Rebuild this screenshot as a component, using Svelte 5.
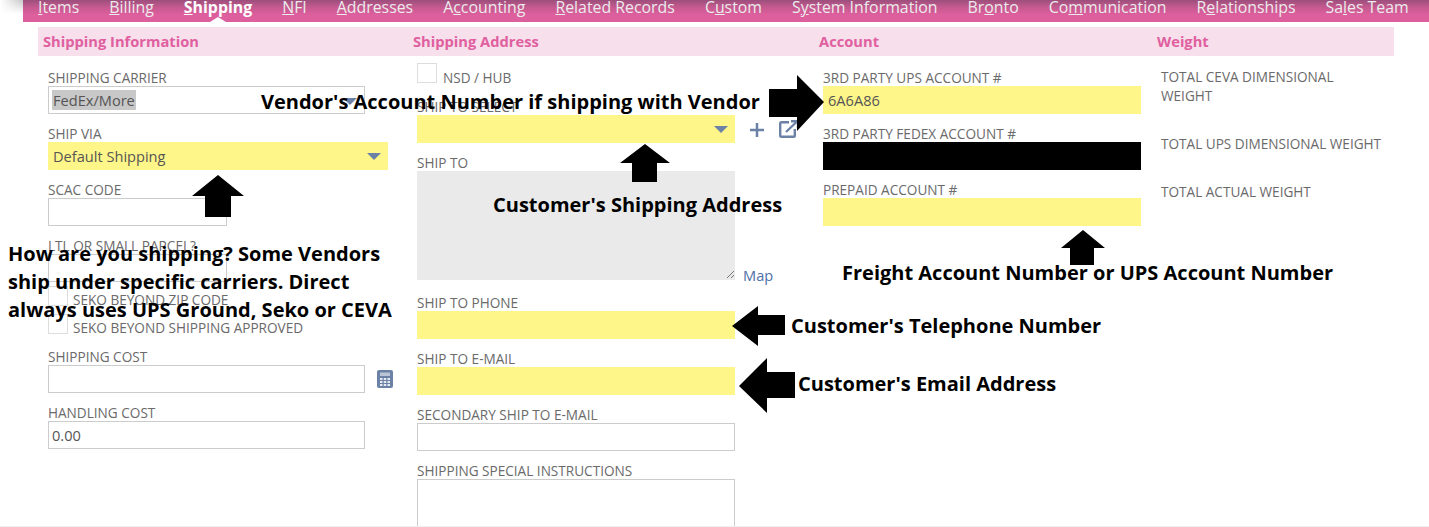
<script>
  const tabs = [
    ["", "I", "tems"], ["", "B", "illing"], ["", "S", "hipping"], ["", "N", "FI"],
    ["", "A", "ddresses"], ["A", "c", "counting"], ["", "R", "elated Records"], ["C", "u", "stom"],
    ["S", "y", "stem Information"], ["Br", "o", "nto"], ["Co", "m", "munication"],
    ["R", "e", "lationships"], ["Sa", "l", "es Team"]
  ];

  // annotation arrows: box x, y, w, h and the polygon inside it
  const arrows = [
    { x: 192, y: 175, w: 52, h: 42, p: "26,0 52,21 39,21 39,42 13,42 13,21 0,21" },
    { x: 769, y: 75, w: 56, h: 56, p: "0,14 28,14 28,0 55,27 28,56 28,42 0,42" },
    { x: 620, y: 144, w: 50, h: 38, p: "25,0 50,19 37,19 37,38 12,38 12,19 0,19" },
    { x: 1061, y: 230, w: 45, h: 35, p: "22,0 44,18 33,18 33,35 9,35 9,18 0,18" },
    { x: 732, y: 306, w: 53, h: 40, p: "0,20 26,0 26,9 53,9 53,29 26,29 26,40" },
    { x: 739, y: 358, w: 56, h: 55, p: "0,28 28,0 28,14 56,14 56,40 28,40 28,55" }
  ];

  const notes = [
    { x: 261, y: 88, t: "Vendor's Account Number if shipping with Vendor" },
    { x: 493, y: 191, t: "Customer's Shipping Address" },
    { x: 842, y: 259, t: "Freight Account Number or UPS Account Number" },
    { x: 791, y: 312, t: "Customer's Telephone Number" },
    { x: 798, y: 370, t: "Customer's Email Address" },
    { x: 8, y: 240, t: "How are you shipping? Some Vendors" },
    { x: 8, y: 268, t: "ship under specific carriers. Direct" },
    { x: 8, y: 296, t: "always uses UPS Ground, Seko or CEVA" }
  ];
</script>

<div class="page">
  <nav class="tabs">
    {#each tabs as [a, u, b], i}
      <span class="tab" class:active={i === 2}>{a}<u>{u}</u>{b}</span>
    {/each}
  </nav>

  <div class="heads">
    <div>Shipping Information</div>
    <div>Shipping Address</div>
    <div>Account</div>
    <div>Weight</div>
  </div>

  <div class="cols">
    <section class="col">
      <div class="label">SHIPPING CARRIER</div>
      <div class="ctl short sel"><span class="picked">FedEx/More</span><i class="caret"></i></div>
      <div class="label">SHIP VIA</div>
      <div class="ctl wide req sel">Default Shipping<i class="caret"></i></div>
      <div class="label">SCAC CODE</div>
      <div class="ctl scac"></div>
      <div class="label">LTL OR SMALL PARCEL?</div>
      <div class="ctl scac"></div>
      <div class="check first"><span class="box"></span><span>SEKO BEYOND ZIP CODE</span></div>
      <div class="check"><span class="box"></span><span>SEKO BEYOND SHIPPING APPROVED</span></div>
      <div class="label gap">SHIPPING COST</div>
      <div class="with-icon">
        <div class="ctl short"></div>
        <svg class="calc" width="16" height="18" viewBox="0 0 16 18">
          <rect width="16" height="18" rx="2" fill="#6b82a6" />
          <rect x="3" y="2.500" width="10" height="3.500" fill="#b9c5d6" />
          <path d="M3 8h2.500v2H3zM6.750 8h2.500v2h-2.500zM10.500 8H13v2h-2.500zM3 11h2.500v2H3zM6.750 11h2.500v2h-2.500zM10.500 11H13v2h-2.500zM3 14h2.500v2H3zM6.750 14h2.500v2h-2.500zM10.500 14H13v2h-2.500z" fill="#e6ebf1" />
        </svg>
      </div>
      <div class="label">HANDLING COST</div>
      <div class="ctl short">0.00</div>
    </section>

    <section class="col">
      <div class="nsd"><span class="box"></span><span>NSD / HUB</span></div>
      <div class="label">SHIP TO SELECT</div>
      <div class="with-icon">
        <div class="ctl mid req sel"><i class="caret"></i></div>
        <svg class="plus" width="14" height="14" viewBox="0 0 14 14">
          <path d="M7 0v14M0 7h14" stroke="#6b82a6" stroke-width="2.500" fill="none" />
        </svg>
        <svg class="open" width="20" height="18" viewBox="0 0 20 18">
          <path d="M10 2.200H2.500a1.300 1.300 0 0 0-1.300 1.300v12a1.300 1.300 0 0 0 1.300 1.300h12a1.300 1.300 0 0 0 1.300-1.300V9" stroke="#6b82a6" stroke-width="2.400" fill="none" />
          <path d="M7 12L18 1.500M12 1.200h7V8" stroke="#6b82a6" stroke-width="2.400" fill="none" />
        </svg>
      </div>
      <div class="label">SHIP TO</div>
      <div class="with-icon map-row">
        <div class="area">
          <svg class="grip" width="9" height="9" viewBox="0 0 9 9">
            <path d="M1 8L8 1M5 8L8 5" stroke="#777" stroke-width="1" fill="none" />
          </svg>
        </div>
        <a class="map" href="#map">Map</a>
      </div>
      <div class="label after-area">SHIP TO PHONE</div>
      <div class="ctl mid req"></div>
      <div class="label">SHIP TO E-MAIL</div>
      <div class="ctl mid req"></div>
      <div class="label">SECONDARY SHIP TO E-MAIL</div>
      <div class="ctl mid"></div>
      <div class="label">SHIPPING SPECIAL INSTRUCTIONS</div>
      <div class="ctl mid notes-box"></div>
    </section>

    <section class="col">
      <div class="label">3RD PARTY UPS ACCOUNT #</div>
      <div class="ctl acct req">6A6A86</div>
      <div class="label">3RD PARTY FEDEX ACCOUNT #</div>
      <div class="ctl acct black"></div>
      <div class="label">PREPAID ACCOUNT #</div>
      <div class="ctl acct req"></div>
    </section>

    <section class="col weights">
      <div class="w w1">TOTAL CEVA DIMENSIONAL WEIGHT</div>
      <div class="w w2">TOTAL UPS DIMENSIONAL WEIGHT</div>
      <div class="w">TOTAL ACTUAL WEIGHT</div>
    </section>
  </div>

  {#each arrows as a}
    <svg class="arrow" width={a.w} height={a.h} viewBox="0 0 {a.w} {a.h}" style="left:{a.x}px;top:{a.y}px">
      <polygon points={a.p} fill="#000" />
    </svg>
  {/each}

  {#each notes as n}
    <div class="note" style="left:{n.x}px;top:{n.y}px">{n.t}</div>
  {/each}
</div>

<style>
  :global(body) {
    margin: 0;
    background: #fff;
  }

  .page {
    position: relative;
    width: 1429px;
    height: 527px;
    overflow: hidden;
    box-sizing: border-box;
    border-bottom: 1px solid #f0f0f0;
    font-family: "Open Sans", sans-serif;
    font-size: 13.6px;
    color: #6a6a6a;
  }

  /* soft shadow left of the tab bar */
  .page::before {
    content: "";
    position: absolute;
    left: 0;
    top: 0;
    width: 23px;
    height: 14px;
    background: linear-gradient(to right, rgba(0, 0, 0, 0), rgba(0, 0, 0, 0.22));
    -webkit-mask-image: linear-gradient(#000, transparent);
    mask-image: linear-gradient(#000, transparent);
  }

  .tabs {
    display: flex;
    gap: 30px;
    height: 22px;
    margin-left: 23px;
    padding-left: 15px;
    box-sizing: border-box;
    background: linear-gradient(#9c4f7c 0, #c4598f 7px, #de5f9e 15px, #de5f9e 100%);
    line-height: 15px;
    font-size: 15.87px;
    color: #ececec;
    white-space: nowrap;
  }

  .tab {
    position: relative;
  }

  .tab.active {
    font-weight: 700;
    color: #fff;
  }

  .tab.active::after {
    content: "";
    position: absolute;
    left: 50%;
    bottom: 0;
    margin-left: -8px;
    border: 8px solid transparent;
    border-top: 0;
    border-bottom: 5px solid #fff;
  }

  .heads {
    display: grid;
    grid-template-columns: 370px 406px 338px 1fr;
    height: 29px;
    margin: 5px 35px 0 38px;
    padding-left: 5px;
    background: #f7dfec;
    line-height: 29px;
    font-size: 14.7px;
    font-weight: 700;
    color: #e0609f;
  }

  .cols {
    display: grid;
    grid-template-columns: 369px 406px 338px 1fr;
    margin-left: 48px;
    padding-top: 10px;
  }

  .col {
    display: flex;
    flex-direction: column;
    align-items: flex-start;
  }

  .label {
    height: 20px;
    line-height: 24px;
    white-space: nowrap;
  }

  .ctl {
    position: relative;
    height: 28px;
    margin-bottom: 8px;
    padding-left: 3px;
    box-sizing: border-box;
    border: 1px solid #ccc;
    line-height: 27px;
    font-size: 14.6px;
    color: #555;
    white-space: nowrap;
  }

  .short { width: 317px; }
  .wide { width: 340px; }
  .scac { width: 179px; }
  .mid { width: 318px; }
  .acct { width: 318px; }

  .req {
    border: 0;
    background: #fff689;
    padding-left: 5px;
    line-height: 29px;
  }

  .black {
    border: 0;
    background: #000;
  }

  .picked {
    display: inline-block;
    height: 20px;
    line-height: 20px;
    background: #c8c8c8;
    padding: 0 1px;
    margin-top: 3px;
    vertical-align: top;
  }

  .caret {
    position: absolute;
    right: 7px;
    top: 11px;
    border: 7px solid transparent;
    border-top: 7px solid #6b82a6;
    border-bottom: 0;
  }

  .box {
    flex: none;
    width: 20px;
    height: 20px;
    box-sizing: border-box;
    border: 1px solid #ddd;
  }

  .check {
    display: flex;
    gap: 5px;
    height: 20px;
    margin-bottom: 8px;
    line-height: 28px;
    white-space: nowrap;
  }

  .check.first {
    margin-top: -4px;
  }

  .label.gap {
    margin-top: 3px;
  }

  .with-icon {
    display: flex;
    align-items: flex-start;
  }

  .calc {
    margin: 5px 0 0 12px;
  }

  .plus {
    margin: 8px 0 0 15px;
  }

  .open {
    margin: 5px 0 0 15px;
  }

  .nsd {
    display: flex;
    gap: 6px;
    height: 32px;
    margin-top: -3px;
  }

  .nsd span:last-child {
    line-height: 29px;
  }

  .area {
    position: relative;
    width: 318px;
    height: 109px;
    background: #eaeaea;
  }

  .grip {
    position: absolute;
    right: 0;
    bottom: 1px;
  }

  .map {
    display: block;
    height: 15px;
    margin: 94px 0 0 8px;
    line-height: 20px;
    font-size: 14.6px;
    color: #4d6fa8;
    text-decoration: none;
  }

  .after-area {
    margin-top: 11px;
  }

  .notes-box {
    height: 60px;
  }

  .weights {
    width: 225px;
  }

  .w {
    line-height: 19px;
  }

  .w1 {
    height: 67px;
    margin-top: 1px;
  }

  .w2 {
    height: 48px;
  }

  .arrow {
    position: absolute;
  }

  .note {
    position: absolute;
    font-family: "Open Sans", sans-serif;
    font-size: 20px;
    font-weight: 700;
    line-height: 28px;
    color: #000;
    white-space: nowrap;
  }
</style>
